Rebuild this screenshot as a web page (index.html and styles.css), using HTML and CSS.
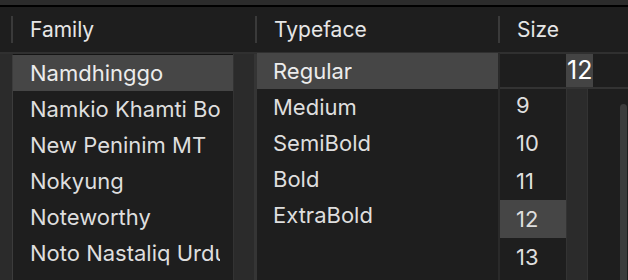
FILE: index.html
```html
<!DOCTYPE html>
<html lang="en">
<head>
    <meta charset="UTF-8">
    <title>Fonts</title>
    <link rel="stylesheet" href="styles.css">
</head>
<body>
    <div class="panel">
        <div class="topbar"></div>

        <!-- Column headers -->
        <div class="header">
            <div class="hcell gutter"></div>
            <div class="hcell col-family"><span class="sep"></span><span class="label">Family</span></div>
            <div class="hcell col-face"><span class="sep"></span><span class="label">Typeface</span></div>
            <div class="hcell col-size"><span class="sep"></span><span class="label">Size</span></div>
        </div>

        <div class="body">
            <div class="gutter"></div>

            <!-- Family list -->
            <div class="col-family family">
                <div class="list">
                    <div class="row selected"><span>Namdhinggo</span></div>
                    <div class="row"><span>Namkio Khamti Book</span></div>
                    <div class="row"><span>New Peninim MT</span></div>
                    <div class="row"><span>Nokyung</span></div>
                    <div class="row"><span>Noteworthy</span></div>
                    <div class="row"><span>Noto Nastaliq Urdu</span></div>
                    <div class="row"><span>Noto Sans Javanese</span></div>
                </div>
                <div class="track"></div>
            </div>

            <!-- Typeface list -->
            <div class="col-face face">
                <div class="row selected"><span>Regular</span></div>
                <div class="row"><span>Medium</span></div>
                <div class="row"><span>SemiBold</span></div>
                <div class="row"><span>Bold</span></div>
                <div class="row"><span>ExtraBold</span></div>
            </div>

            <!-- Size picker -->
            <div class="col-size size">
                <div class="size-input"><span class="picked">12</span></div>
                <div class="size-body">
                    <div class="size-list">
                        <div class="srow">9</div>
                        <div class="srow">10</div>
                        <div class="srow">11</div>
                        <div class="srow selected">12</div>
                        <div class="srow">13</div>
                    </div>
                    <div class="size-track"></div>
                    <div class="size-rest"><div class="thumb"></div></div>
                </div>
            </div>
        </div>
    </div>
</body>
</html>
```

FILE: styles.css
```css
body {
    margin: 0;
    padding: 0;
    background-color: #1e1e1e;
    font-family: 'Inter', 'Roboto', sans-serif;
    color: #dedede;
    overflow: hidden;
}

.panel {
    width: 628px;
    height: 280px;
    display: flex;
    flex-direction: column;
    overflow: hidden;
}

.topbar {
    height: 5px;
    background-color: #2b2b2b;
    border-bottom: 2px solid #000;
    flex-shrink: 0;
}

.header {
    height: 45px;
    display: flex;
    background-color: #1e1e1e;
    border-bottom: 2px solid #303030;
    flex-shrink: 0;
}

.hcell {
    display: flex;
    align-items: center;
}

.header .gutter {
    width: 11px;
}

.header .col-family {
    width: 244px;
}

.header .col-face {
    width: 243px;
}

.header .col-size {
    flex: 1;
}

.sep {
    width: 2px;
    height: 27px;
    background-color: #3a3a3a;
}

.label {
    margin-left: 17px;
    font-size: 21px;
    color: #e6e6e6;
}

.body {
    flex: 1;
    display: flex;
    min-height: 0;
}

.body .gutter {
    width: 12px;
    background-color: #2b2b2b;
}

.family {
    display: flex;
    width: 245px;
}

.family .list {
    width: 220px;
    border-left: 1px solid #3c3c3c;
    border-top: 1px solid #141414;
    background-color: #1e1e1e;
}

.family .track {
    flex: 1;
    background-color: #2b2b2b;
    border-left: 1px solid #333;
    border-right: 3px solid #353535;
}

.row {
    height: 36px;
    display: flex;
    align-items: center;
    padding: 0 13px 0 17px;
    font-size: 22px;
}

.row span {
    display: block;
    min-width: 0;
    overflow: hidden;
    white-space: nowrap;
}

.row.selected {
    background-color: #464646;
    color: #ececec;
}

.face {
    width: 241px;
    border-right: 2px solid #2a2a2a;
    margin-top: -1px;
}

.face .row {
    padding-left: 16px;
}

.size {
    flex: 1;
    display: flex;
    flex-direction: column;
}

.size-input {
    height: 33px;
    padding-left: 66px;
    display: flex;
    align-items: center;
    border-bottom: 2px solid #333;
}

.picked {
    background-color: #444;
    color: #fff;
    font-size: 25px;
    line-height: 33px;
    padding: 0 1px;
}

.size-body {
    flex: 1;
    display: flex;
    min-height: 0;
}

.size-list {
    width: 66px;
    overflow: hidden;
}

.srow {
    height: 38px;
    display: flex;
    align-items: center;
    padding-left: 16px;
    font-size: 22px;
}

.srow:first-child {
    margin-top: -3px;
}

.srow.selected {
    background-color: #464646;
}

.size-track {
    width: 20px;
    background-color: #2b2b2b;
    border-left: 1px solid #333;
    border-right: 1px solid #333;
}

.size-rest {
    flex: 1;
    display: flex;
    justify-content: flex-end;
    padding: 15px 1px 0 0;
}

.thumb {
    width: 7px;
    height: 200px;
    border-radius: 4px;
    background-color: #3c3c3c;
}
```
